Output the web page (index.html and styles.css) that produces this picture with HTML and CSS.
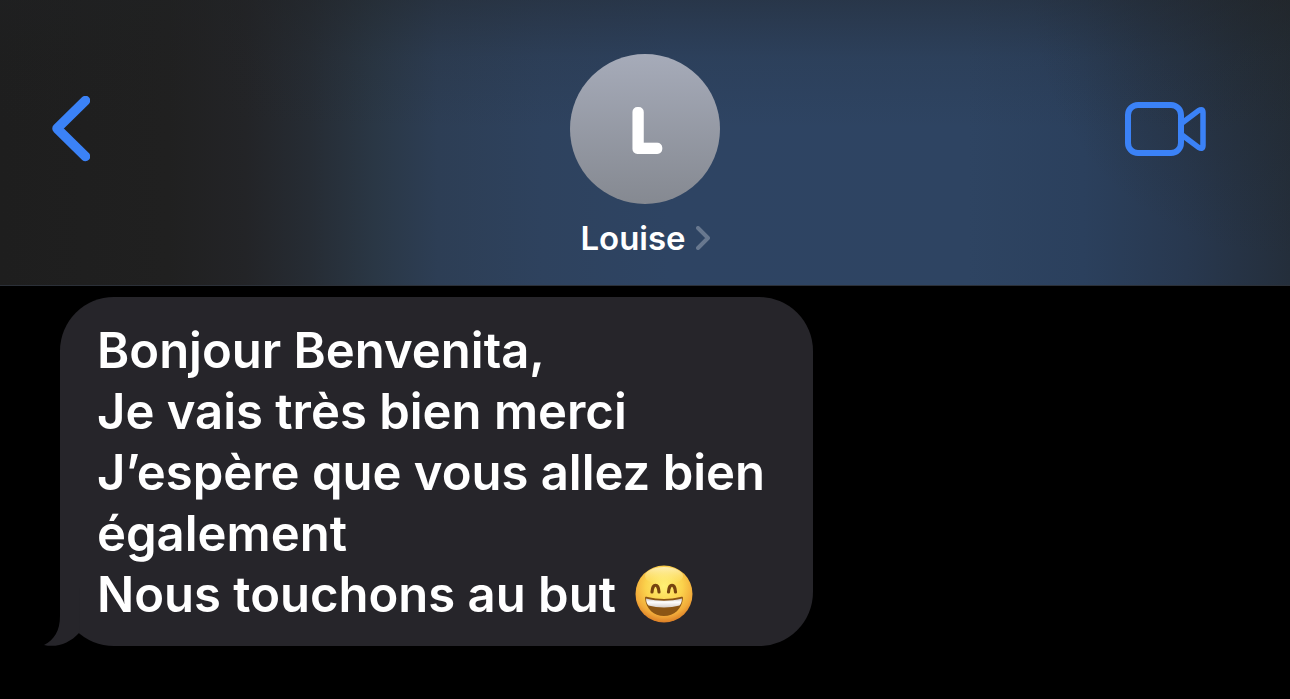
FILE: index.html
```html
<!DOCTYPE html>
<html lang="fr">

<head>
    <meta charset="UTF-8">
    <meta name="viewport" content="width=device-width, initial-scale=1.0">
    <title>Louise</title>
    <link rel="stylesheet" href="styles.css">
</head>

<body>
    <header class="chat-header">
        <button class="icon-btn back" type="button" aria-label="Retour">
            <svg width="38" height="66" viewBox="0 0 38 66" aria-hidden="true">
                <path d="M33.500 4.500 L5 32.500 L33.500 60.500" fill="none" stroke="currentColor" stroke-width="9.500" stroke-linecap="round" stroke-linejoin="round" />
            </svg>
        </button>
        <a class="contact" href="#">
            <svg class="avatar" viewBox="0 0 150 150">
                <text class="initial" x="76" y="95" text-anchor="middle">L</text>
            </svg>
            <span class="contact-name">
                Louise
                <svg width="14" height="24" viewBox="0 0 14 24" aria-hidden="true">
                    <path d="M2 2 L12 12 L2 22" fill="none" stroke="currentColor" stroke-width="4" stroke-linecap="round" stroke-linejoin="round" />
                </svg>
            </span>
        </a>
        <button class="icon-btn video" type="button" aria-label="Appel vidéo">
            <svg width="82" height="54" viewBox="0 0 82 54" aria-hidden="true">
                <g fill="none" stroke="currentColor" stroke-width="6" stroke-linejoin="round">
                    <rect x="4" y="3" width="53" height="48" rx="10" />
                    <path d="M58 21 L74.500 8.600 Q79 6 79 10.500 V43.500 Q79 48 74.500 45.400 L58 33" stroke-width="5.500" />
                </g>
            </svg>
        </button>
    </header>

    <main class="messages">
        <div class="bubble">
            <p>Bonjour Benvenita,</p>
            <p>Je vais très bien merci</p>
            <p>J’espère que vous allez bien également</p>
            <p>Nous touchons au but
                <svg class="emoji" viewBox="0 0 58 58" role="img" aria-label="😄">
                    <defs>
                        <radialGradient id="face" cx="50%" cy="36%" r="65%">
                            <stop offset="0" stop-color="#fff176" />
                            <stop offset="0.500" stop-color="#fbd24c" />
                            <stop offset="0.800" stop-color="#f2ab3a" />
                            <stop offset="1" stop-color="#d97a25" />
                        </radialGradient>
                        <linearGradient id="shine" x1="0" y1="0" x2="0" y2="1">
                            <stop offset="0" stop-color="#fffbe0" stop-opacity="0.700" />
                            <stop offset="1" stop-color="#fff176" stop-opacity="0" />
                        </linearGradient>
                        <linearGradient id="teeth" x1="0" y1="0" x2="0" y2="1">
                            <stop offset="0" stop-color="#c9c3c0" />
                            <stop offset="0.400" stop-color="#ffffff" />
                            <stop offset="1" stop-color="#d8d0cb" />
                        </linearGradient>
                    </defs>
                    <circle cx="29" cy="29" r="28.500" fill="url(#face)" />
                    <ellipse cx="29" cy="11" rx="19" ry="9" fill="url(#shine)" />
                    <g fill="none" stroke="#76430f" stroke-width="3.200" stroke-linecap="round">
                        <path d="M17 27 C17.500 18 23.500 18 24 27" />
                        <path d="M33.500 27 C34 18 40 18 40.500 27" />
                    </g>
                    <path d="M10 33 C10 31.500 11 31.500 12.500 32 C23 34.500 35 34.500 45.500 32 C47 31.500 48 31.500 48 33 C47 44 39 51 29 51 C19 51 11 44 10 33 Z" fill="#8b5514" />
                    <path d="M11 33.500 C23 36.500 35 36.500 47 33.500 C47 36 46 39 44.500 40.500 C35 43 23 43 13.500 40.500 C12 39 11 36 11 33.500 Z" fill="url(#teeth)" />
                </svg>
            </p>
            <svg class="tail" width="36" height="58" viewBox="0 0 36 58" aria-hidden="true">
                <path d="M16 0 V28 C16 43 10 52 0 57 C13 60 26 55 35 45 L36 0 Z" fill="currentColor" />
            </svg>
        </div>
    </main>
</body>

</html>
```

FILE: styles.css
```css
* {
    box-sizing: border-box;
}

body {
    margin: 0;
    min-height: 100vh;
    background: #000;
    color: #fff;
    font-family: Inter, "Liberation Sans", sans-serif;
}

.chat-header {
    display: grid;
    grid-template-columns: 1fr auto 1fr;
    align-items: start;
    padding: 54px 84px 27px 52px;
    border-bottom: 1px solid #2b3038;
    background:
        linear-gradient(to bottom, rgba(32, 34, 36, 0.4), rgba(32, 34, 36, 0.12) 20%, rgba(32, 34, 36, 0) 45%),
        radial-gradient(ellipse 20% 90% at 100% 0, rgba(34, 40, 44, 0.6), rgba(34, 40, 44, 0)),
        linear-gradient(to right, #1e1e1e 0%, #202020 13%, #232427 19%, #262c34 24%, #2a3745 29%, #2d3e55 34%, #2e425e 42%, #2e4463 52%, #2e4462 75%, #2b405d 84%, #28384f 92%, #242e3b 100%);
}

.icon-btn {
    display: flex;
    align-items: center;
    height: 150px;
    padding: 0;
    border: none;
    background: none;
    color: #3b82f7;
    cursor: pointer;
}

.back {
    justify-self: start;
}

.video {
    justify-self: end;
}

.contact {
    display: flex;
    flex-direction: column;
    align-items: center;
    gap: 14px;
    /* the side paddings differ, keep the contact in the middle of the bar */
    margin: 0 -16px 0 16px;
    color: #fff;
    text-decoration: none;
}

.avatar {
    width: 150px;
    height: 150px;
    border-radius: 50%;
    background: linear-gradient(#a6abb9, #858991);
}

.initial {
    fill: #fff;
    stroke: #fff;
    stroke-width: 10px;
    stroke-linejoin: round;
    font-size: 51px;
    font-weight: 100;
}

.contact-name {
    display: flex;
    align-items: center;
    gap: 10px;
    font-size: 33px;
    font-weight: 600;
    line-height: 40px;
}

.contact-name svg {
    color: #68788f;
}

.messages {
    padding: 11px 60px 53px;
}

.bubble {
    position: relative;
    width: fit-content;
    max-width: 753px;
    padding: 23px 37px 21px;
    border-radius: 54px;
    background: #26252a;
    font-size: 49px;
    font-weight: 600;
    line-height: 61px;
}

.bubble p {
    margin: 0;
}

.emoji {
    width: 58px;
    height: 58px;
    margin: -10px 0 -10px 7px;
    vertical-align: -1px;
}

.tail {
    position: absolute;
    left: -16px;
    bottom: 0;
    color: #26252a;
}
```
